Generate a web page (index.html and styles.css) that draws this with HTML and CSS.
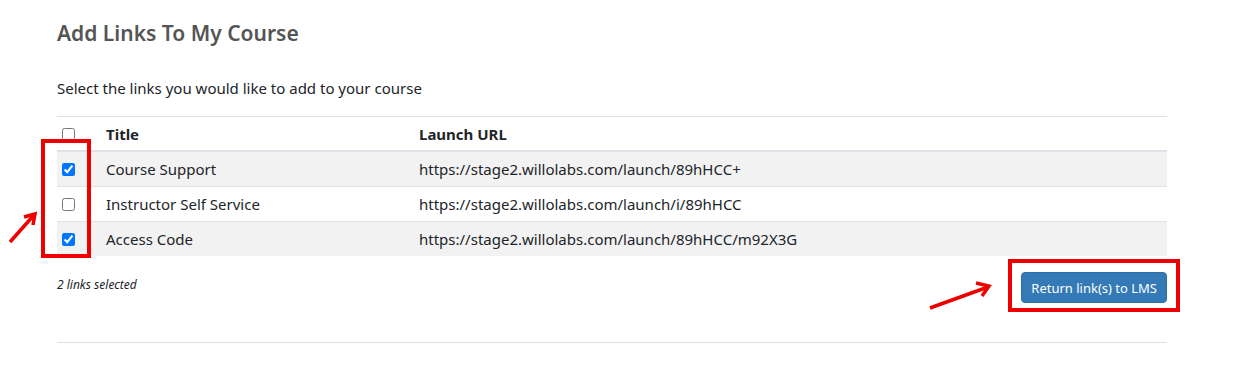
FILE: index.html
```
<!DOCTYPE html>
<html>
<head>
<title>Add Links To My Course</title>
<link rel="stylesheet" href="styles.css">
</head>
<body>
<div class="page">
<h2 class="page-title">Add Links To My Course</h2>

<p class="intro">Select the links you would like to add to your course</p>

<table class="links">
<thead>
<tr>
<th class="check"><input type="checkbox"></th>
<th class="title">Title</th>
<th>Launch URL</th>
</tr>
</thead>
<tbody>
<tr class="odd">
<td class="check"><input type="checkbox" checked></td>
<td class="title">Course Support</td>
<td>https://stage2.willolabs.com/launch/89hHCC+</td>
</tr>
<tr>
<td class="check"><input type="checkbox"></td>
<td class="title">Instructor Self Service</td>
<td>https://stage2.willolabs.com/launch/i/89hHCC</td>
</tr>
<tr class="odd">
<td class="check"><input type="checkbox" checked></td>
<td class="title">Access Code</td>
<td>https://stage2.willolabs.com/launch/89hHCC/m92X3G</td>
</tr>
</tbody>
</table>

<div class="footer">
<span class="count">2 links selected</span>
<button class="btn-return">Return link(s) to LMS</button>
</div>

<hr class="rule">
</div>

<!-- screenshot annotations -->
<div class="mark mark-checks"></div>
<div class="mark mark-button"></div>
<svg class="arrow arrow-checks" width="40" height="40" viewBox="0 0 40 40">
<line x1="8" y1="34" x2="32" y2="7" stroke="#e00" stroke-width="3.5"/>
<polyline points="22,9 33,6 31,17" fill="none" stroke="#e00" stroke-width="3.5"/>
</svg>
<svg class="arrow arrow-button" width="70" height="36" viewBox="0 0 70 36">
<line x1="2" y1="30" x2="60" y2="9" stroke="#e00" stroke-width="3.5"/>
<polyline points="48,5 61,8 54,18" fill="none" stroke="#e00" stroke-width="3.5"/>
</svg>
</body>
</html>
```
FILE: styles.css
```
body
{ margin: 0;
font-family: "Noto Sans", "Open Sans", sans-serif;
color: #212529;
background-color: #fff;
}

div.page
{ width: 1110px;
margin-left: 57px;
padding-top: 17px;
}

h2.page-title
{ margin: 0;
font-size: 21px;
font-weight: 600;
color: #555;
line-height: 32px;
}

p.intro
{ margin: 28px 0 17px 0;
font-size: 15px;
line-height: 22px;
}

/* Table */

table.links
{ width: 100%;
border-collapse: collapse;
font-size: 15px;
}

table.links th,
table.links td
{ text-align: left;
padding: 6px 0;
height: 22px;
line-height: 22px;
border-top: 1px solid #dee2e6;
}

table.links th
{ font-weight: 700;
border-bottom: 2px solid #dee2e6;
padding: 6px 0 5px 0;
}

table.links tr.odd td
{ background-color: #f2f2f2;
}

table.links .check
{ width: 44px;
padding-left: 5px;
}

table.links .title
{ width: 313px;
}

table.links input
{ margin: 0;
width: 13px;
height: 13px;
vertical-align: -1px;
}

/* Footer */

div.footer
{ display: flex;
justify-content: space-between;
align-items: flex-start;
margin-top: 16px;
}

span.count
{ margin-top: 5px;
font-size: 12px;
line-height: 16px;
font-style: italic;
}

button.btn-return
{ background-color: #337ab7;
color: #fff;
border: 1px solid #2e6da4;
border-radius: 4px;
font-family: inherit;
font-size: 13px;
height: 31px;
padding: 0 9px;
}

hr.rule
{ margin: 39px 0 0 0;
border: 0;
border-top: 1px solid #e0e0e0;
}

/* Annotations */

div.mark
{ position: absolute;
border: 4px solid #e00;
box-sizing: border-box;
}

div.mark-checks
{ left: 41px; top: 139px; width: 50px; height: 119px;
}

div.mark-button
{ left: 1008px; top: 259px; width: 172px; height: 53px;
}

svg.arrow
{ position: absolute;
}

svg.arrow-checks
{ left: 2px; top: 208px;
}

svg.arrow-button
{ left: 928px; top: 278px;
}
```
